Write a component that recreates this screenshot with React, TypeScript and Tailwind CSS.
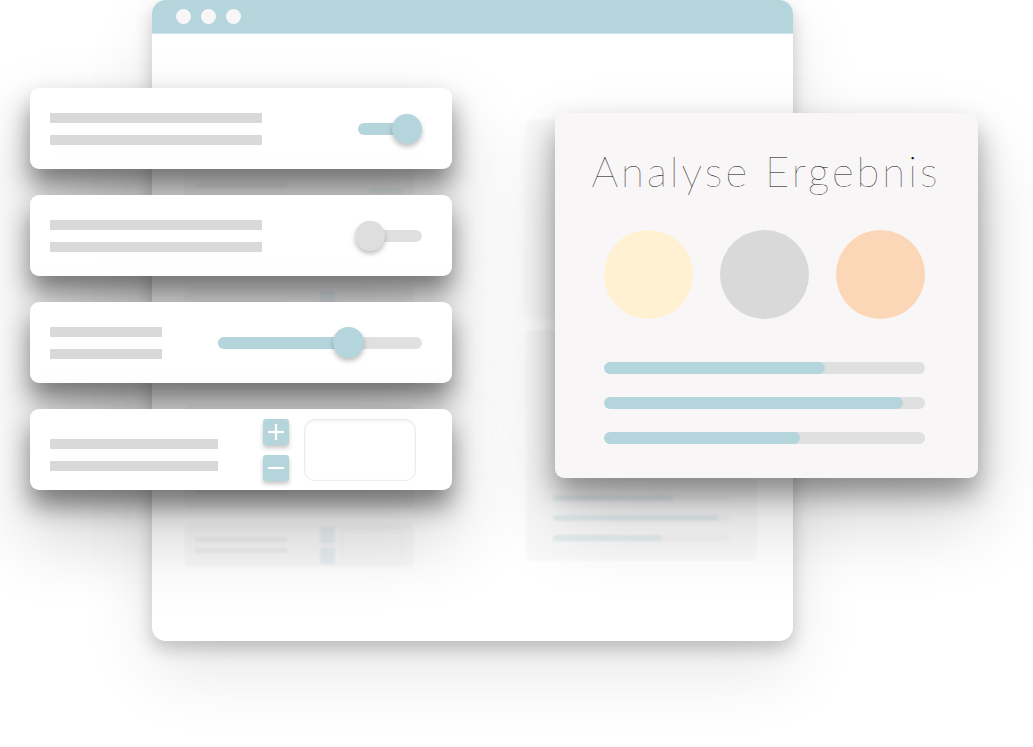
const TEAL = "bg-[#b5d5dc]";

type GhostKind = "toggle" | "slider" | "stepper";
const GHOST_CARDS: GhostKind[] = ["toggle", "toggle", "slider", "stepper", "toggle", "toggle", "slider", "stepper"];
const RESULT_BARS = [69, 93, 61];
const GHOST_BARS = [68, 93, 61];

function Lines({ width }: { width: number }) {
  return (
    <div className="flex flex-col gap-[12px]">
      <div className="h-[10px] bg-[#d9d9d9]" style={{ width }} />
      <div className="h-[10px] bg-[#d9d9d9]" style={{ width }} />
    </div>
  );
}

function Toggle({ on }: { on: boolean }) {
  return (
    <div className="relative w-[64px] h-[30px] flex items-center">
      <div className={`w-full h-[12px] rounded-full ${on ? TEAL : "bg-[#e0e0e0]"}`} />
      <div
        className={`absolute top-0 w-[30px] h-[30px] rounded-full shadow-[0_3px_5px_rgba(0,0,0,0.25)] ${
          on ? "right-0 bg-[#b5d5dc]" : "-left-[3px] bg-[#dedede]"
        }`}
      />
    </div>
  );
}

function Slider({ value }: { value: number }) {
  return (
    <div className="relative w-[204px] h-[31px] flex items-center">
      <div className="w-full h-[12px] rounded-full bg-[#e0e0e0] overflow-hidden">
        <div className="h-full bg-[#b5d5dc]" style={{ width: value }} />
      </div>
      <div
        className="absolute top-0 w-[31px] h-[31px] rounded-full bg-[#b5d5dc] shadow-[0_3px_5px_rgba(0,0,0,0.25)]"
        style={{ left: value - 15 }}
      />
    </div>
  );
}

function StepButton({ plus }: { plus: boolean }) {
  return (
    <div className="w-[26px] h-[26px] rounded-[3px] bg-[#b5d5dc] shadow-[0_3px_4px_rgba(0,0,0,0.22)] flex items-center justify-center">
      <svg width="18" height="18" viewBox="0 0 18 18">
        <line x1="1" y1="9" x2="17" y2="9" stroke="white" strokeWidth="2.2" />
        {plus && <line x1="9" y1="1" x2="9" y2="17" stroke="white" strokeWidth="2.2" />}
      </svg>
    </div>
  );
}

function FrontCard({ children, className = "" }: { children: React.ReactNode; className?: string }) {
  return (
    <div
      className={`h-[81px] rounded-[9px] bg-white flex items-center justify-between pl-[20px] shadow-[0_16px_26px_rgba(0,0,0,0.46),0_40px_80px_rgba(0,0,0,0.22)] ${className}`}
    >
      {children}
    </div>
  );
}

function GhostCard({ kind }: { kind: GhostKind }) {
  return (
    <div className="h-[44px] rounded-[6px] bg-black/[0.025] flex items-center justify-between px-[11px]">
      <div className="flex flex-col gap-[6px]">
        <div className="w-[92px] h-[5px] bg-black/[0.045]" />
        <div className="w-[92px] h-[5px] bg-black/[0.045]" />
      </div>
      {kind === "toggle" && <div className="w-[34px] h-[6px] rounded-full bg-[#b5d5dc]/20" />}
      {kind === "slider" && <div className="w-[100px] h-[6px] rounded-full bg-[#b5d5dc]/20" />}
      {kind === "stepper" && (
        <div className="flex items-center gap-[7px]">
          <div className="flex flex-col gap-[3px]">
            <div className="w-[15px] h-[17px] rounded-[2px] bg-[#b5d5dc]/25" />
            <div className="w-[15px] h-[17px] rounded-[2px] bg-[#b5d5dc]/25" />
          </div>
          <div className="w-[61px] h-[37px] rounded-[6px] border border-black/[0.03]" />
        </div>
      )}
    </div>
  );
}

export default function App() {
  return (
    <div className="relative w-[1033px] h-[747px] overflow-hidden bg-white font-['Lato',sans-serif]">
      {/* browser window */}
      <div className="absolute left-[152px] top-0 w-[641px] h-[641px] rounded-[14px] bg-white overflow-hidden flex flex-col shadow-[0_8px_18px_rgba(0,0,0,0.2),0_30px_70px_rgba(0,0,0,0.1)]">
        <div className="h-[34px] shrink-0 bg-[#b5d5dc] border-b border-[#cde3e8] flex items-center gap-[10px] pl-[24px]">
          <div className="w-[15px] h-[15px] rounded-full bg-[#f8f6f7]" />
          <div className="w-[15px] h-[15px] rounded-full bg-[#f8f6f7]" />
          <div className="w-[15px] h-[15px] rounded-full bg-[#f8f6f7]" />
        </div>
        <div className="flex-1 flex justify-between pl-[32px] pr-[36px] blur-[0.8px]">
          <div className="w-[230px] pt-[76px] flex flex-col gap-[15px]">
            {GHOST_CARDS.map((k, i) => (
              <GhostCard key={i} kind={k} />
            ))}
          </div>
          <div className="w-[231px] pt-[86px] flex flex-col gap-[17px]">
            <div className="h-[193px] rounded-[6px] bg-black/[0.025] shadow-[0_4px_10px_rgba(0,0,0,0.04)]" />
            <div className="h-[231px] rounded-[6px] bg-black/[0.025] flex flex-col justify-end gap-[14px] px-[27px] pb-[20px]">
              {GHOST_BARS.map((v, i) => (
                <div key={i} className="h-[6px] rounded-full bg-black/[0.025] overflow-hidden">
                  <div className="h-full bg-[#b5d5dc]/25" style={{ width: `${v}%` }} />
                </div>
              ))}
            </div>
          </div>
        </div>
      </div>

      {/* settings cards */}
      <div className="absolute left-[30px] top-[88px] w-[422px] flex flex-col gap-[26px]">
        <FrontCard className="pr-[30px]">
          <Lines width={212} />
          <Toggle on />
        </FrontCard>
        <FrontCard className="pr-[30px]">
          <Lines width={212} />
          <Toggle on={false} />
        </FrontCard>
        <FrontCard className="pr-[30px]">
          <Lines width={112} />
          <Slider value={130} />
        </FrontCard>
        <FrontCard className="pr-[36px]">
          <div className="mt-[10px]">
            <Lines width={168} />
          </div>
          <div className="flex items-center gap-[15px]">
            <div className="flex flex-col gap-[10px]">
              <StepButton plus />
              <StepButton plus={false} />
            </div>
            <div className="w-[112px] h-[62px] rounded-[10px] bg-white border border-[#ececec] shadow-[inset_0_1px_3px_rgba(0,0,0,0.07)]" />
          </div>
        </FrontCard>
      </div>

      {/* result card */}
      <div className="absolute left-[555px] top-[113px] w-[423px] h-[365px] rounded-[9px] bg-[#f8f6f7] flex flex-col pl-[49px] pr-[53px] pt-[37px] shadow-[0_16px_28px_rgba(0,0,0,0.36),0_40px_80px_rgba(0,0,0,0.18)]">
        <div className="-ml-[49px] -mr-[53px] pr-[1px] flex justify-center">
          <span className="text-[42px] leading-none font-extralight text-[#000] whitespace-nowrap tracking-[3px] antialiased">
            Analyse Ergebnis
          </span>
        </div>
        <div className="mt-[38px] flex justify-between">
          <div className="w-[89px] h-[89px] rounded-full bg-[#fff1d2]" />
          <div className="w-[89px] h-[89px] rounded-full bg-[#d9d9d9]" />
          <div className="w-[89px] h-[89px] rounded-full bg-[#fcd7b7]" />
        </div>
        <div className="mt-[43px] flex flex-col gap-[23px]">
          {RESULT_BARS.map((v, i) => (
            <div key={i} className="h-[12px] rounded-full bg-[#e0e0e0] overflow-hidden">
              <div className="h-full rounded-full bg-[#b5d5dc]" style={{ width: `${v}%` }} />
            </div>
          ))}
        </div>
      </div>
    </div>
  );
}
